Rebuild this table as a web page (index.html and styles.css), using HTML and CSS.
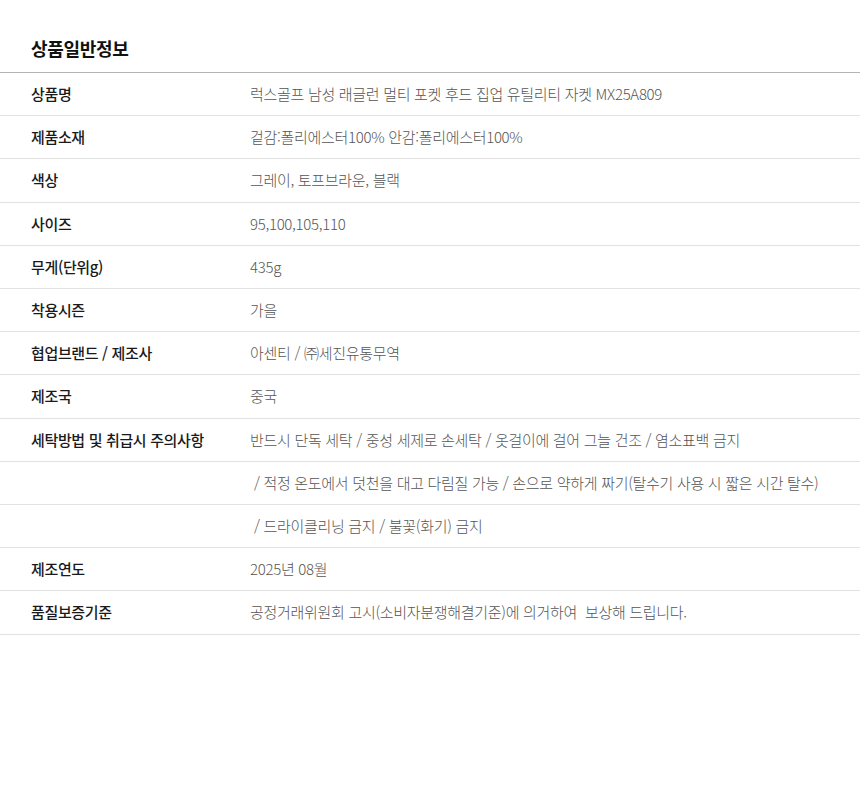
FILE: index.html
```html
<!DOCTYPE html>
<html lang="ko">
<head>
<meta charset="utf-8">
<title>상품일반정보</title>
<link rel="stylesheet" href="styles.css">
</head>
<body>
<section class="info">
  <h2 class="info-title">상품일반정보</h2>
  <table class="info-table">
    <tbody>
      <tr><th>상품명</th><td>럭스골프 남성 래글런 멀티 포켓 후드 집업 유틸리티 자켓 MX25A809</td></tr>
      <tr><th>제품소재</th><td>겉감:폴리에스터100% 안감:폴리에스터100%</td></tr>
      <tr><th>색상</th><td>그레이, 토프브라운, 블랙</td></tr>
      <tr><th>사이즈</th><td>95,100,105,110</td></tr>
      <tr><th>무게(단위g)</th><td>435g</td></tr>
      <tr><th>착용시즌</th><td>가을</td></tr>
      <tr><th>협업브랜드 / 제조사</th><td>아센티 / ㈜세진유통무역</td></tr>
      <tr><th>제조국</th><td>중국</td></tr>
      <tr><th>세탁방법 및 취급시 주의사항</th><td>반드시 단독 세탁 / 중성 세제로 손세탁 / 옷걸이에 걸어 그늘 건조 / 염소표백 금지</td></tr>
      <tr><th></th><td>&nbsp;/ 적정 온도에서 덧천을 대고 다림질 가능 / 손으로 약하게 짜기(탈수기 사용 시 짧은 시간 탈수)</td></tr>
      <tr><th></th><td>&nbsp;/ 드라이클리닝 금지 / 불꽃(화기) 금지</td></tr>
      <tr><th>제조연도</th><td>2025년 08월</td></tr>
      <tr><th>품질보증기준</th><td>공정거래위원회 고시(소비자분쟁해결기준)에 의거하여&nbsp; 보상해 드립니다.</td></tr>
    </tbody>
  </table>
</section>
</body>
</html>
```
FILE: styles.css
```css
html, body {
  margin: 0;
  padding: 0;
  background: #fff;
}
body {
  font-family: "Noto Sans CJK KR", "Noto Sans", sans-serif;
  color: #222;
}
.info {
  width: 860px;
  padding-top: 34px;
}
.info-title {
  margin: 0 0 0 31px;
  font-size: 18px;
  font-weight: 700;
  letter-spacing: -0.3px;
  line-height: 28px;
  height: 38px;
  color: #111;
}
.info-table {
  width: 100%;
  border-collapse: collapse;
  border-top: 1px solid #b4b4b4;
  border-bottom: 1px solid #b4b4b4;
}
.info-table th,
.info-table td {
  padding: 11px 0;
  line-height: 20.2px;
  font-size: 15px;
  text-align: left;
  vertical-align: middle;
  border-bottom: 1px solid #e2e2e2;
  letter-spacing: -0.3px;
}
.info-table th {
  width: 219px;
  padding-left: 31px;
  font-weight: 500;
  letter-spacing: -0.35px;
  color: #1a1a1a;
}
.info-table td {
  color: #555;
  font-weight: 300;
}
```
